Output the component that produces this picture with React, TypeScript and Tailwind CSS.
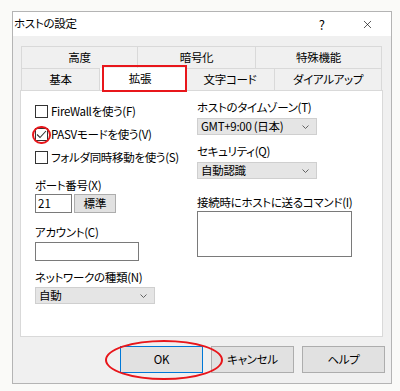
import { X } from 'lucide-react';

const font = "font-['Noto_Sans_CJK_JP','Noto_Sans',sans-serif] [font-feature-settings:'palt']";

function Check({ label, checked = false, circled = false }: { label: string; checked?: boolean; circled?: boolean }) {
  return (
    <div className="h-[23px] flex items-center gap-[3px]">
      <div className="relative w-[13px] h-[13px] border border-[#333] bg-white flex items-center justify-center">
        {checked && (
          <svg width="11" height="9" viewBox="0 0 11 9" fill="none">
            <path d="M1 4.5 L4 7.5 L10 1" stroke="#333" strokeWidth="1.1" />
          </svg>
        )}
        {circled && (
          <div className="absolute -left-[4px] -top-[3px] w-[19px] h-[18px] rounded-full border-2 border-[#e8161b]" />
        )}
      </div>
      <span className="text-[11.5px] tracking-[-0.3px] leading-none">{label}</span>
    </div>
  );
}

function Select({ value, w }: { value: string; w: string }) {
  return (
    <div className={`h-[17px] ${w} bg-[#e5e5e5] border border-[#cfcfcf] flex items-center justify-between pl-[3px] pr-[7px]`}>
      <span className="text-[11.5px] tracking-[-0.3px] leading-none">{value}</span>
      <svg width="7" height="4" viewBox="0 0 7 4" fill="none">
        <path d="M0.5 0.5 L3.5 3.5 L6.5 0.5" stroke="#555" strokeWidth="0.9" />
      </svg>
    </div>
  );
}

function Label({ children, className = '' }: { children: React.ReactNode; className?: string }) {
  return (
    <div className={`h-[16px] flex items-center text-[11.5px] tracking-[-0.3px] leading-none ${className}`}>{children}</div>
  );
}

export default function App() {
  return (
    <div className={`w-[400px] h-[391px] bg-[#fafaf8] pt-[11px] pl-[12px] text-black ${font}`}>
      <div className="w-[380px] h-[373px] border border-[#b4b4b4] bg-[#f0f0f0] flex flex-col">
        {/* title bar */}
        <div className="h-[24px] bg-white flex items-center pl-[1px] shrink-0">
          <span className="text-[11.5px] tracking-[-0.3px] leading-none">ホストの設定</span>
          <span className="ml-auto text-[13px] leading-none mr-[36px]">?</span>
          <X className="w-[13px] h-[13px] mr-[17px]" strokeWidth={1.2} />
        </div>

        {/* tabs */}
        <div className="mt-[10px] ml-[8px] w-[361px] text-[11.5px] tracking-[-0.3px] leading-none">
          <div className="flex h-[22px]">
            <div className="w-[117px] border border-[#d9d9d9] border-b-0 flex items-center justify-center">高度</div>
            <div className="w-[118px] border-t border-r border-[#d9d9d9] flex items-center justify-center">暗号化</div>
            <div className="w-[126px] border-t border-r border-[#d9d9d9] flex items-center justify-center">特殊機能</div>
          </div>
          <div className="flex h-[22px]">
            <div className="w-[79px] border border-[#d9d9d9] border-b-0 flex items-center justify-center">基本</div>
            <div className="relative w-[86px] bg-white flex items-center justify-center pr-[6px] pb-[1px]">
              拡張
              <div className="absolute left-[2px] -top-[3px] w-[85px] h-[27px] border-2 border-[#e8161b]" />
            </div>
            <div className="w-[89px] border-t border-r border-[#d9d9d9] flex items-center justify-center">文字コード</div>
            <div className="w-[107px] border-t border-r border-[#d9d9d9] flex items-center justify-center">ダイアルアップ</div>
          </div>
        </div>

        {/* page */}
        <div className="ml-[7px] w-[363px] h-[247px] bg-white border border-[#d9d9d9] flex pt-[9px] pl-[14px]">
          <div className="w-[162px] flex flex-col">
            <Check label="FireWallを使う(F)" />
            <Check label="PASVモードを使う(V)" checked circled />
            <Check label="フォルダ同時移動を使う(S)" />
            <Label className="mt-[9px]">ポート番号(X)</Label>
            <div className="flex gap-[2px]">
              <div className="w-[37px] h-[19px] border border-[#7a7a7a] bg-white pl-[2px] flex items-center text-[11.5px] leading-none">21</div>
              <div className="w-[42px] h-[19px] border border-[#adadad] bg-[#e1e1e1] flex items-center justify-center text-[11.5px] leading-none">標準</div>
            </div>
            <Label className="mt-[12px]">アカウント(C)</Label>
            <div className="mt-[1px] w-[104px] h-[19px] border border-[#7a7a7a] bg-white" />
            <Label className="mt-[9px]">ネットワークの種類(N)</Label>
            <div className="mt-[1px]">
              <Select value="自動" w="w-[120px]" />
            </div>
          </div>

          <div className="flex flex-col">
            <Label>ホストのタイムゾーン(T)</Label>
            <div className="mt-[2px]">
              <Select value="GMT+9:00 (日本)" w="w-[120px]" />
            </div>
            <Label className="mt-[9px]">セキュリティ(Q)</Label>
            <div className="mt-[2px]">
              <Select value="自動認識" w="w-[120px]" />
            </div>
            <Label className="mt-[16px]">接続時にホストに送るコマンド(I)</Label>
            <div className="w-[155px] h-[46px] border border-[#7a7a7a] bg-white" />
          </div>
        </div>

        {/* buttons */}
        <div className="mt-[9px] flex justify-end gap-[8px] pr-[6px] text-[11.5px] tracking-[-0.3px] leading-none">
          <div className="relative w-[83px] h-[27px] bg-[#e1e1e1] border border-[#0078d7] flex items-center justify-center">
            OK
            <div className="absolute -left-[16px] -top-[7px] w-[118px] h-[40px] rounded-[50%] border-2 border-[#e8161b]" />
          </div>
          <div className="w-[83px] h-[27px] bg-[#e1e1e1] border border-[#adadad] flex items-center justify-center">キャンセル</div>
          <div className="w-[83px] h-[27px] bg-[#e1e1e1] border border-[#adadad] flex items-center justify-center">ヘルプ</div>
        </div>
      </div>
    </div>
  );
}
